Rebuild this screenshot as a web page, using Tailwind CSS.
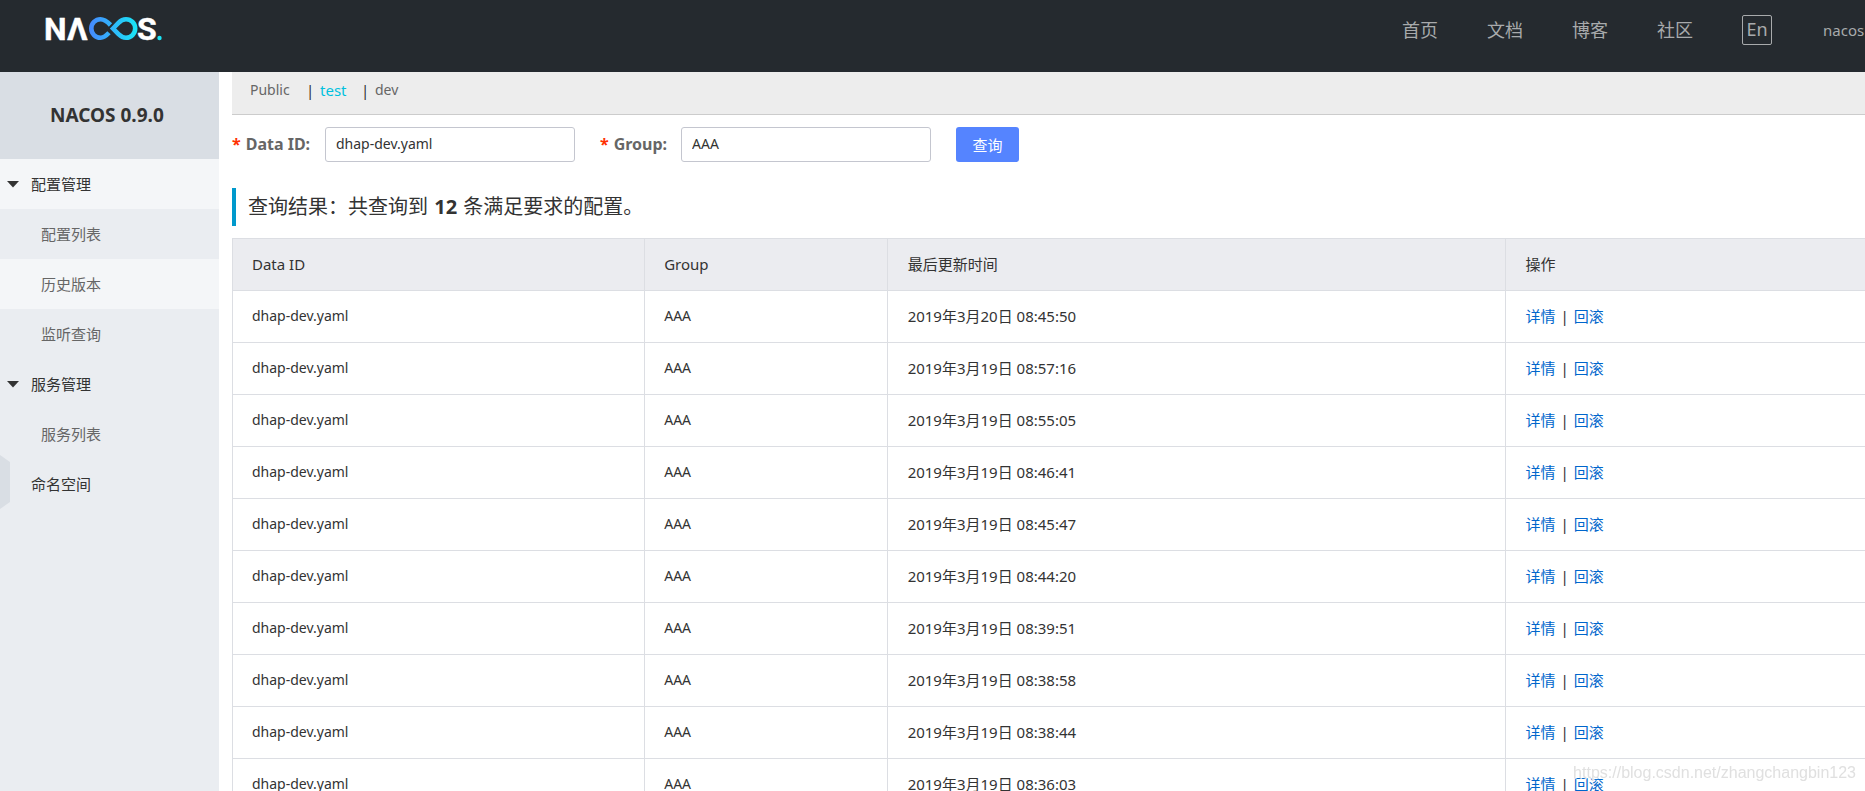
<!DOCTYPE html>
<html lang="zh-CN">
<head>
<meta charset="utf-8">
<title>Nacos</title>
<script src="https://cdn.jsdelivr.net/npm/@tailwindcss/browser@4"></script>
</head>
<body class="flex h-screen flex-col overflow-hidden bg-white font-['Noto_Sans','Noto_Sans_CJK_SC',sans-serif] text-[15px] leading-5 text-[#333]">
<header class="flex h-[72px] shrink-0 items-start justify-between bg-[#252a2f] pl-[42px]">
  <a href="#" aria-label="NACOS" class="pt-2">
    <svg width="124" height="44" viewBox="42 8 124 44">
      <defs><linearGradient id="g" gradientUnits="userSpaceOnUse" x1="89" y1="0" x2="137" y2="0"><stop offset="0" stop-color="#4688ff"/><stop offset="1" stop-color="#19e6f6"/></linearGradient></defs>
      <g fill="#fff" stroke="#fff" stroke-width="0.400" stroke-linejoin="round" font-family="Roboto, sans-serif" font-weight="700" font-size="32">
        <text x="44" y="40">N</text><text x="67" y="40">Λ</text><text x="137" y="40">S</text>
      </g>
      <g fill="none" stroke="url(#g)" stroke-width="4.600">
        <path d="M110.500 25C106.500 21 103.500 19.300 100.500 19.300A9.200 9.200 0 0 0 100.500 37.700C103.500 37.700 106 36 109 32.800"/>
        <path d="M113 28.500L118.500 22.800C121 20.300 123.500 19.300 126 19.300A9.200 9.200 0 0 1 126 37.700C123.500 37.700 121 36.700 118.500 34.200Z"/>
      </g>
      <circle cx="159.500" cy="38" r="2.200" fill="#19e6f6"/>
    </svg>
  </a>
  <nav class="flex items-center gap-[49px] pt-[15px] text-lg leading-[30px] text-[#a8aaac]">
    <a href="#">首页</a>
    <a href="#">文档</a>
    <a href="#">博客</a>
    <a href="#">社区</a>
    <button type="button" class="flex h-[30px] w-[30px] items-center justify-center rounded-xs border border-[#a8aaac] pb-[2px] leading-7">En</button>
    <a href="#" class="w-11 pl-[2px] text-[15px] leading-[30px]">nacos</a>
  </nav>
</header>
<div class="flex min-h-0 flex-1">
  <aside class="relative w-[219px] shrink-0 bg-[#eaedf1]">
    <h1 class="flex h-[87px] items-center bg-[#d9dee4] pb-[2px] pl-[50px] text-[19px] font-bold">NACOS 0.9.0</h1>
    <ul class="leading-[50px]">
      <li>
        <a href="#" class="flex items-center gap-3 bg-[#f4f6f8] pl-[7px]"><svg width="12" height="7" viewBox="0 0 12 7" fill="#333"><path d="M0 0H12L6 6.500Z"/></svg>配置管理</a>
        <ul class="text-[#666]">
          <li><a href="#" class="block pl-[41px]">配置列表</a></li>
          <li><a href="#" class="block bg-[#f4f6f8] pl-[41px]">历史版本</a></li>
          <li><a href="#" class="block pl-[41px]">监听查询</a></li>
        </ul>
      </li>
      <li>
        <a href="#" class="flex items-center gap-3 pl-[7px]"><svg width="12" height="7" viewBox="0 0 12 7" fill="#333"><path d="M0 0H12L6 6.500Z"/></svg>服务管理</a>
        <ul class="text-[#666]"><li><a href="#" class="block pl-[41px]">服务列表</a></li></ul>
      </li>
      <li><a href="#" class="block pl-[31px]">命名空间</a></li>
    </ul>
    <button type="button" aria-label="收起" class="absolute left-0 top-[383px]"><svg width="10" height="54" viewBox="0 0 10 54" fill="#d9dee4"><path d="M0 0L10 7V47L0 54Z"/></svg></button>
  </aside>
  <main class="min-w-0 flex-1 pl-[13px]">
    <div class="flex h-[43px] items-center border-b border-[#ccc] bg-[#ededed] pb-[6px] pl-[18px] text-[#666]">
      <a href="#" class="w-14 text-sm">Public</a>
      <span class="w-[14px] text-[#333]">|</span><a href="#" class="w-[41px] text-[#00c1de]">test</a>
      <span class="w-[14px] text-[#333]">|</span><a href="#" class="text-sm">dev</a>
    </div>
    <form class="flex items-center pt-3">
      <label for="dataId" class="w-[93px] pb-[2px] text-base leading-5 font-bold text-[#666]"><span class="mr-[5px] text-[#ff3000]">*</span>Data ID:</label>
      <input id="dataId" type="text" value="dhap-dev.yaml" class="h-[35px] w-[250px] rounded-[3px] border border-[#c4c6cf] px-[10px] pb-[2px] text-sm">
      <label for="group" class="ml-[25px] w-[81px] pb-[2px] text-base leading-5 font-bold text-[#666]"><span class="mr-[5px] text-[#ff3000]">*</span>Group:</label>
      <input id="group" type="text" value="AAA" class="h-[35px] w-[250px] rounded-[3px] border border-[#c4c6cf] px-[10px] pb-[2px] text-sm">
      <button type="button" class="ml-[25px] h-[35px] w-[63px] rounded-[3px] bg-[#5584ff] text-white">查询</button>
    </form>
    <h2 class="mt-[26px] h-[38px] border-l-4 border-[#09c] pl-3 text-xl leading-[38px]">查询结果：共查询到 <strong class="px-px">12</strong> 条满足要求的配置。</h2>
    <table class="mt-3 w-full table-fixed border-collapse border-l border-[#dcdee3]">
      <colgroup><col class="w-[25.25%]"><col class="w-[14.85%]"><col class="w-[37.85%]"><col></colgroup>
      <thead>
        <tr class="h-[52px] border-y border-[#dcdee3] bg-[#ebecf0] text-left">
          <th class="border-r border-[#dcdee3] px-[19px] pb-[2px] font-normal">Data ID</th>
          <th class="border-r border-[#dcdee3] px-[19px] pb-[2px] font-normal">Group</th>
          <th class="border-r border-[#dcdee3] px-5 pb-[2px] font-normal">最后更新时间</th>
          <th class="px-5 pb-[2px] font-normal">操作</th>
        </tr>
      </thead>
      <tbody id="rows"></tbody>
    </table>
  </main>
</div>
<div class="pointer-events-none fixed bottom-1 right-[9px] font-['Liberation_Sans',sans-serif] text-base leading-7 text-[#e0e0e0] [text-shadow:1px_1px_1px_#fff]">https://blog.csdn.net/zhangchangbin123</div>
<script>
const times = ['20日 08:45:50','19日 08:57:16','19日 08:55:05','19日 08:46:41','19日 08:45:47','19日 08:44:20','19日 08:39:51','19日 08:38:58','19日 08:38:44','19日 08:36:03'];
document.getElementById('rows').innerHTML = times.map(t => `
  <tr class="h-[52px] border-b border-[#dcdee3]">
    <td class="border-r border-[#dcdee3] px-[19px] pb-[2px] text-sm">dhap-dev.yaml</td>
    <td class="border-r border-[#dcdee3] px-[19px] pb-[2px] text-sm">AAA</td>
    <td class="border-r border-[#dcdee3] px-5 pb-[2px]">2019年3月${t}</td>
    <td class="px-5 pb-[2px]"><a href="#" class="text-[#06c]">详情</a><span class="mx-[5px]">|</span><a href="#" class="text-[#06c]">回滚</a></td>
  </tr>`).join('');
</script>
</body>
</html>
